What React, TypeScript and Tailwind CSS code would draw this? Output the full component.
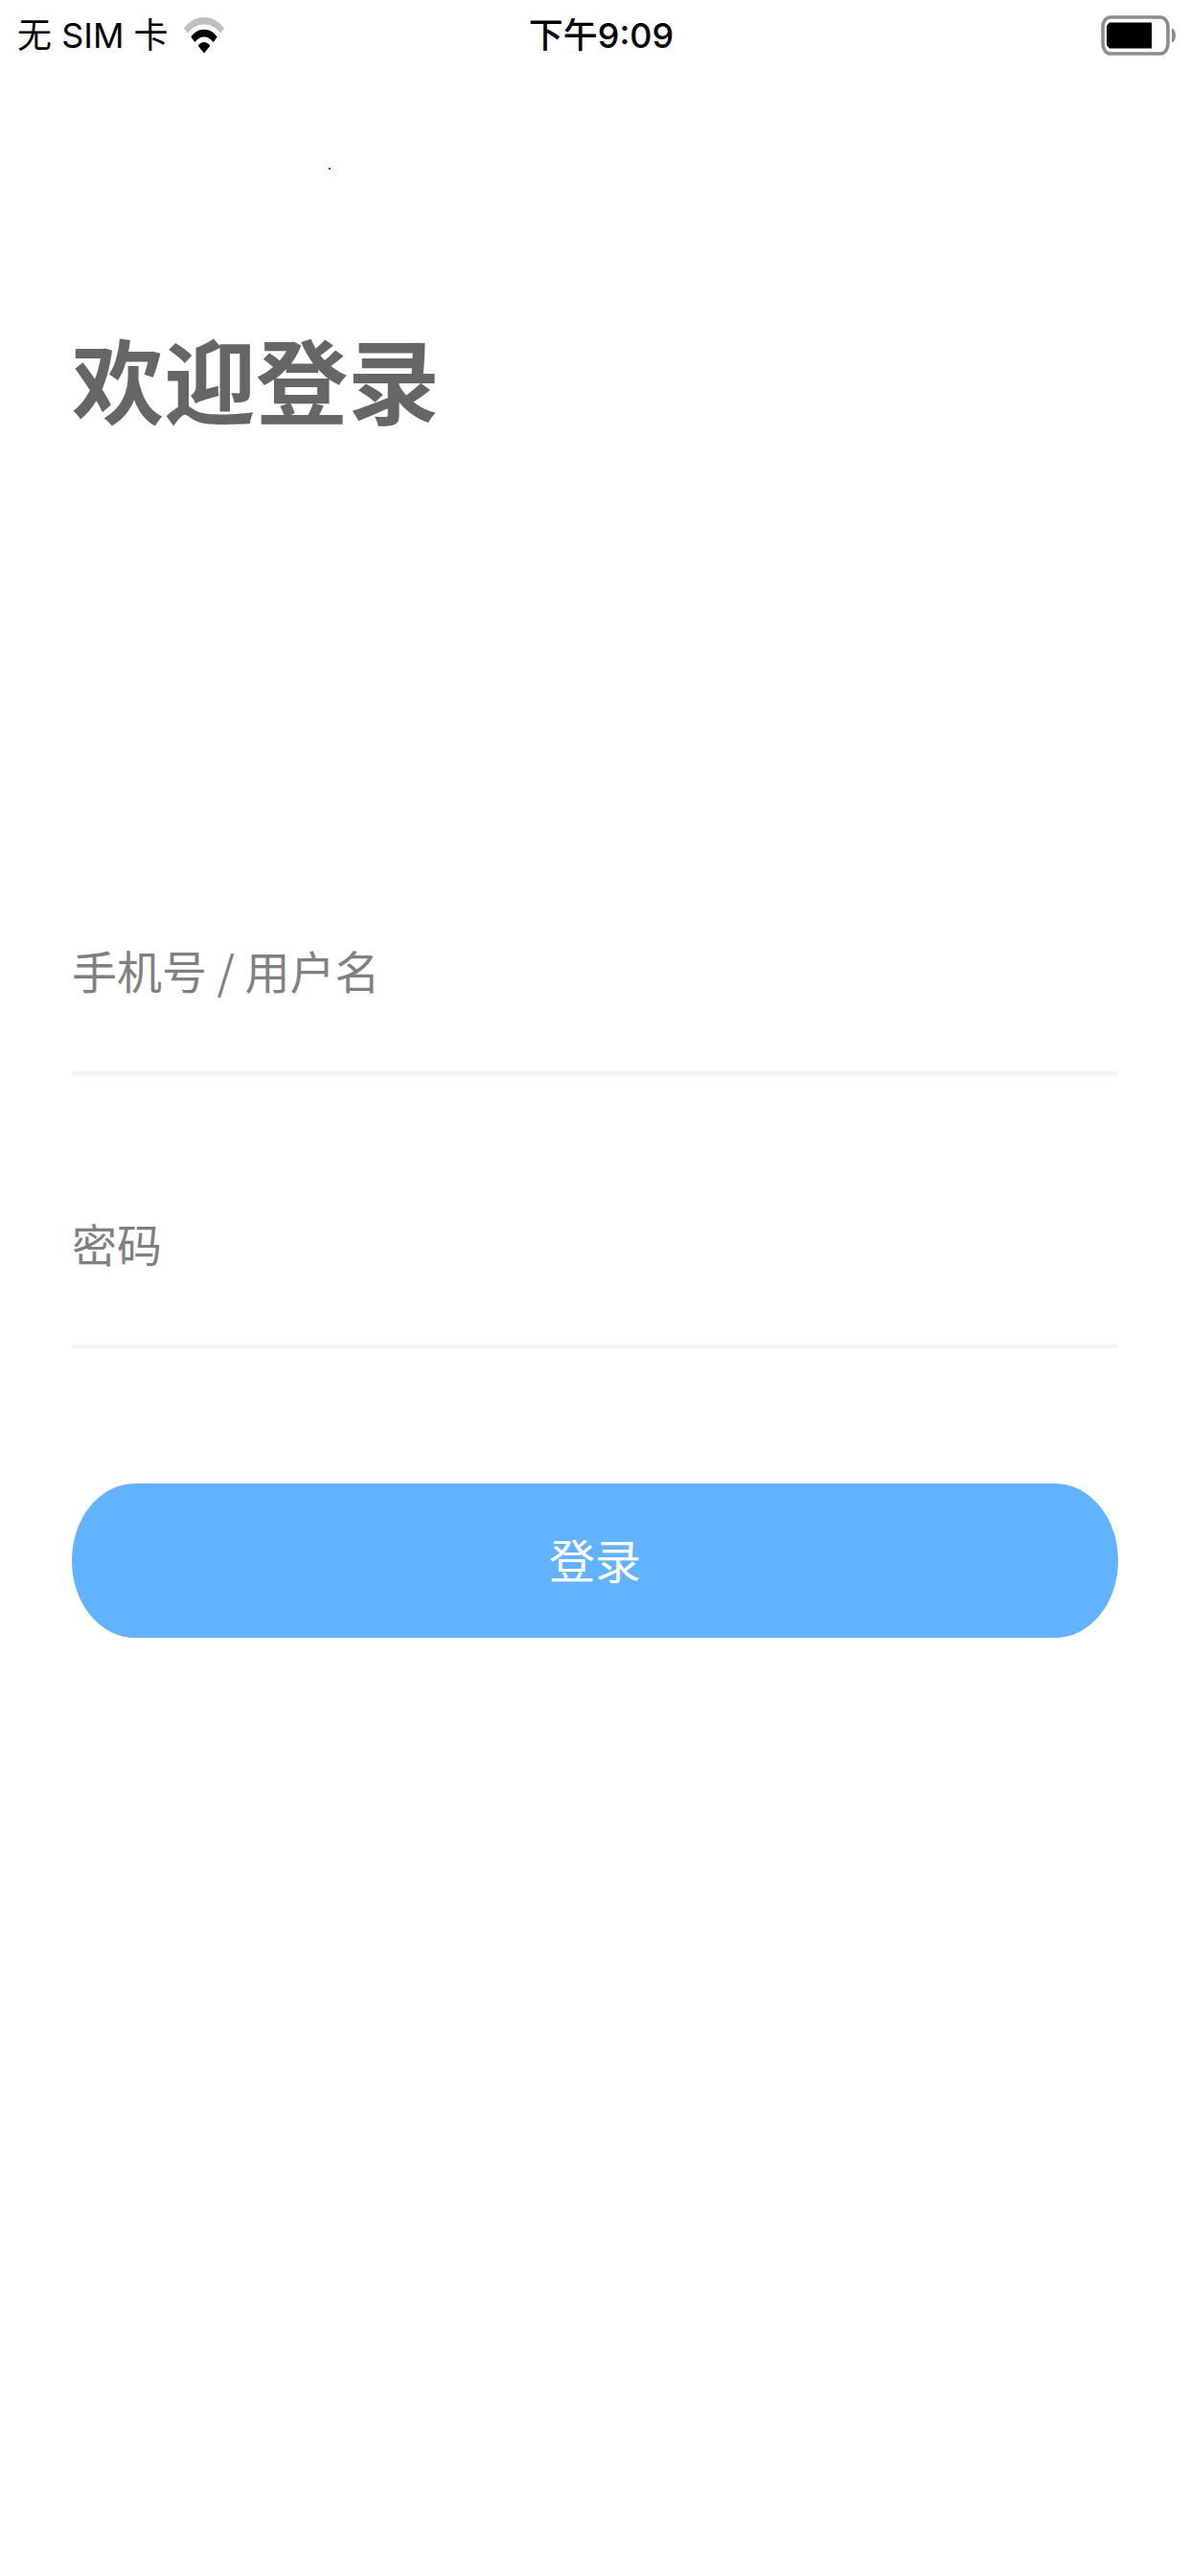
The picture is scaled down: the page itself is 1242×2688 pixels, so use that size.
import React, { useState } from 'react';

function WifiIcon() {
  return (
    <svg width="42" height="38" viewBox="0 0 42 38" aria-label="Wi-Fi">
      {/* outer band, weak signal */}
      <path
        d="M0 11.5C5.5 4.2 12.8 0 21 0s15.5 4.2 21 11.5L38 16.5C33.5 10.7 27.6 7.4 21 7.4S8.5 10.7 4 16.5z"
        fill="#bfbfbf"
      />
      <path
        d="M7.3 20.5C11 15.5 15.7 12.8 21 12.8s10 2.7 13.7 7.7l-4 5.5C28 22.3 24.7 20.4 21 20.4S14 22.3 11.3 26z"
        fill="#000"
      />
      <path
        d="M14.7 29.7C16.4 27.3 18.5 26 21 26s4.6 1.3 6.3 3.7L21 37.5z"
        fill="#000"
      />
    </svg>
  );
}

function BatteryIcon() {
  return (
    <svg width="80" height="42" viewBox="0 0 80 42" aria-label="电池">
      <rect
        x="2"
        y="2"
        width="68"
        height="38"
        rx="8"
        ry="10"
        fill="#fff"
        stroke="#8c8c8c"
        strokeWidth="3.6"
      />
      <path d="M9 7.5H53V34.5H9L6 31V11z" fill="#000" />
      <path d="M74 13.5C79.3 15 79.3 27 74 28.5z" fill="#8c8c8c" />
    </svg>
  );
}

function StatusBar() {
  return (
    <header className="grid grid-cols-3 items-center h-[74px] pl-[18px] pr-[13px] text-[36px] leading-[48px] text-black">
      <div className="flex items-center gap-4">
        <span>无 SIM 卡</span>
        <WifiIcon />
      </div>
      <span className="text-center font-medium pl-2">下午9:09</span>
      <div className="flex justify-end">
        <BatteryIcon />
      </div>
    </header>
  );
}

type FieldProps = {
  label: string;
  type: string;
  value: string;
  onChange: (value: string) => void;
};

function Field({ label, type, value, onChange }: FieldProps) {
  return (
    <input
      type={type}
      aria-label={label}
      placeholder={label}
      value={value}
      onChange={(e) => onChange(e.target.value)}
      className="block w-full h-[212px] pb-[6px] border-b-4 border-[#f4f4f4] bg-transparent text-[47px] text-[#666] placeholder:text-[#808080] outline-none"
    />
  );
}

function App() {
  const [user, setUser] = useState('');
  const [password, setPassword] = useState('');

  return (
    <div className="min-h-screen bg-white font-[Inter,'Noto_Sans_CJK_SC',sans-serif]">
      <StatusBar />

      <main className="px-[75px]">
        {/* small dot above the title */}
        <div className="mt-[101px] ml-[268px] w-[2px] h-[2px] bg-[#444]" />

        <h1 className="mt-[145px] text-[96px] leading-[144px] font-bold font-['Noto_Sans_CJK_SC',sans-serif] text-[#666]">
          欢迎登录
        </h1>

        {/* login form */}
        <form
          className="mt-[444px] font-['Noto_Sans_CJK_SC',sans-serif]"
          onSubmit={(e) => e.preventDefault()}
        >
          <div className="flex flex-col gap-[73px]">
            <Field
              label="手机号 / 用户名"
              type="text"
              value={user}
              onChange={setUser}
            />
            <Field
              label="密码"
              type="password"
              value={password}
              onChange={setPassword}
            />
          </div>

          <button
            type="submit"
            className="block w-full h-[161px] pb-[6px] mt-[141px] rounded-[66px/80px] bg-[#61b3ff] text-5xl text-white cursor-pointer"
          >
            登录
          </button>
        </form>
      </main>
    </div>
  );
}

export default App;
